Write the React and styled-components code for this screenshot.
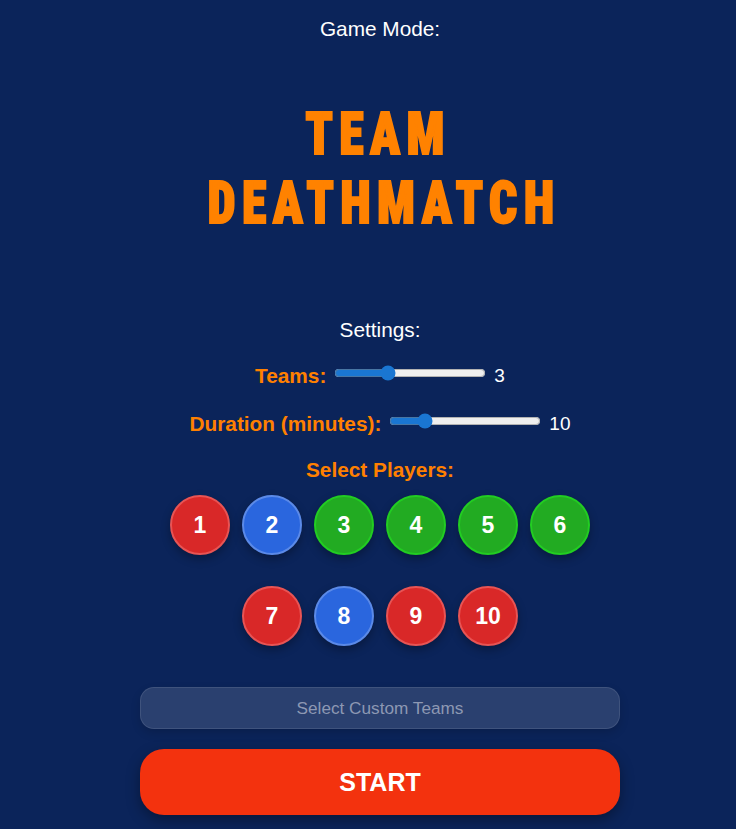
import React, { useState } from "react"
import styled, { createGlobalStyle } from "styled-components"

const GlobalStyle = createGlobalStyle`
    body {
        margin: 0;
        background-color: #0b245a;
        font-family: "Liberation Sans", Arial, sans-serif;
        color: #ffffff;
    }
`

// which team each player sits in
const players = [
    { id: 1, team: 'red' },
    { id: 2, team: 'blue' },
    { id: 3, team: 'green' },
    { id: 4, team: 'green' },
    { id: 5, team: 'green' },
    { id: 6, team: 'green' },
    { id: 7, team: 'red' },
    { id: 8, team: 'blue' },
    { id: 9, team: 'red' },
    { id: 10, team: 'red' },
]

export default function App() {
    const [teams, setTeams] = useState(3)
    const [duration, setDuration] = useState(10)

    return (
        <>
            <GlobalStyle />
            <Page>
                <Caption>Game Mode:</Caption>
                <ModeTitle>TEAM<br />DEATHMATCH</ModeTitle>

                <Caption $top={90}>Settings:</Caption>
                <SettingRow $top={22}>
                    <Label>Teams:</Label>
                    <Range type="range" min={2} max={5} value={teams} onChange={e => setTeams(+e.target.value)} />
                    <Value>{teams}</Value>
                </SettingRow>
                <SettingRow $top={24}>
                    <Label>Duration (minutes):</Label>
                    <Range type="range" min={5} max={30} value={duration} onChange={e => setDuration(+e.target.value)} />
                    <Value>{duration}</Value>
                </SettingRow>

                <Label $top={22} as="div">Select Players:</Label>
                <Players>
                    {players.map(p => (
                        <Player key={p.id} $team={p.team}>{p.id}</Player>
                    ))}
                </Players>

                <CustomTeams>Select Custom Teams</CustomTeams>
                <StartButton>START</StartButton>
            </Page>
        </>
    )
}

const Page = styled.main`
    display: flex;
    flex-direction: column;
    align-items: center;
    padding: 0 0 14px 24px;
`

const Caption = styled.div`
    margin-top: ${p => p.$top ?? 17}px;
    font-size: 20.8px;
    line-height: 24px;
`

const ModeTitle = styled.h1`
    margin: 69px 0 0;
    padding-left: 8px;
    font-family: Roboto, sans-serif;
    font-weight: 900;
    font-stretch: condensed;
    font-size: 50px;
    line-height: 59px;
    letter-spacing: 6.3px;
    text-indent: -12px;
    text-align: center;
    color: #ff8200;
    -webkit-text-stroke: 1.6px #ff8200;
    transform: scaleY(1.17);
`

const SettingRow = styled.div`
    margin-top: ${p => p.$top}px;
    height: 24px;
    display: flex;
    align-items: center;
    gap: 8px;
`

const Label = styled.label`
    margin-top: ${p => p.$top ?? 0}px;
    font-size: 20.8px;
    line-height: 24px;
    font-weight: 700;
    color: #ff8000;
`

const Range = styled.input`
    width: 152px;
    margin: 0 0 6px;
    accent-color: #1a76d2;
`

const Value = styled.span`
    font-size: 19px;
`

const Players = styled.div`
    width: 480px;
    margin-top: 13px;
    display: flex;
    flex-wrap: wrap;
    justify-content: center;
    column-gap: 12px;
    row-gap: 31px;
`

const palette = {
    red: { fill: '#d92828', ring: '#e85454' },
    blue: { fill: '#2a66de', ring: '#5b8ae8' },
    green: { fill: '#22ab22', ring: '#22cd22' },
}

const Player = styled.button`
    width: 60px;
    height: 60px;
    padding: 0;
    border-radius: 50%;
    border: 2px solid ${p => palette[p.$team].ring};
    background-color: ${p => palette[p.$team].fill};
    color: #ffffff;
    font-family: "Liberation Sans", Arial, sans-serif;
    font-size: 23px;
    font-weight: 700;
    box-shadow: 0 4px 10px rgba(0, 0, 0, 0.3);
    cursor: pointer;
`

const CustomTeams = styled.button`
    margin-top: 41px;
    width: 480px;
    height: 42px;
    border-radius: 14px;
    border: 1px solid rgba(255, 255, 255, 0.1);
    background-color: rgba(255, 255, 255, 0.13);
    color: #8d98b3;
    font-family: "Liberation Sans", Arial, sans-serif;
    font-size: 17.2px;
    box-shadow: 0 4px 10px rgba(0, 0, 0, 0.15);
`

const StartButton = styled.button`
    margin-top: 20px;
    width: 480px;
    height: 66px;
    border: none;
    border-radius: 24px;
    background-color: #f3320e;
    color: #ffffff;
    font-family: "Liberation Sans", Arial, sans-serif;
    font-size: 25px;
    font-weight: 700;
    box-shadow: 0 5px 14px rgba(0, 0, 0, 0.35);
    cursor: pointer;
`
